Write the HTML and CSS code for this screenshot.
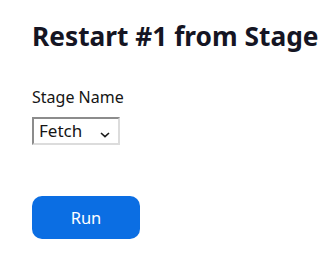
FILE: index.html
```html
<!DOCTYPE html>
<html>
<head>
<meta charset="utf-8">
<link rel="stylesheet" href="styles.css">
</head>
<body>
<main class="page">
  <h1 class="title">Restart #1 from Stage</h1>
  <form class="form">
    <label class="label" for="stage">Stage Name</label>
    <div class="select-wrap">
      <select id="stage" class="select">
        <option>Fetch</option>
      </select>
      <svg class="chev" width="10" height="6" viewBox="0 0 10 6"><path d="M1 1 L5 4.6 L9 1" fill="none" stroke="#1a1a1a" stroke-width="1.6"/></svg>
    </div>
    <button type="button" class="run">Run</button>
  </form>
</main>
</body>
</html>
```
FILE: styles.css
```css
html, body { margin: 0; padding: 0; background: #fff; }
.page {
  padding: 20px 32px 0 32px;
  font-family: "Noto Sans", "Open Sans", sans-serif;
  color: #151515;
}
.title {
  margin: 0;
  font-size: 26.3px;
  line-height: 32px;
  font-weight: 700;
  color: #151523;
  white-space: nowrap;
}
.form {
  display: flex;
  flex-direction: column;
  align-items: flex-start;
  margin-top: 34px;
}
.label {
  font-size: 16px;
  line-height: 22px;
  color: #151515;
}
.select-wrap {
  position: relative;
  margin-top: 9px;
  width: 88px;
  height: 28px;
}
.select {
  display: block;
  appearance: none;
  -webkit-appearance: none;
  box-sizing: border-box;
  width: 88px;
  height: 28px;
  margin: 0;
  padding: 0 0 0 5px;
  border: 2px solid;
  border-color: #8c8c8c #dcdcdc #dcdcdc #8c8c8c;
  border-radius: 0;
  background: #fff;
  font-family: "Noto Sans", "Open Sans", sans-serif;
  font-size: 17px;
  line-height: 22px;
  color: #151515;
}
.chev {
  position: absolute;
  right: 10px;
  top: 15px;
  pointer-events: none;
}
.run {
  margin-top: 51px;
  width: 108px;
  height: 43px;
  border: 0;
  border-radius: 10px;
  background: #0b6ee3;
  color: #fff;
  font-family: "Noto Sans", "Open Sans", sans-serif;
  font-size: 16.5px;
}
```
